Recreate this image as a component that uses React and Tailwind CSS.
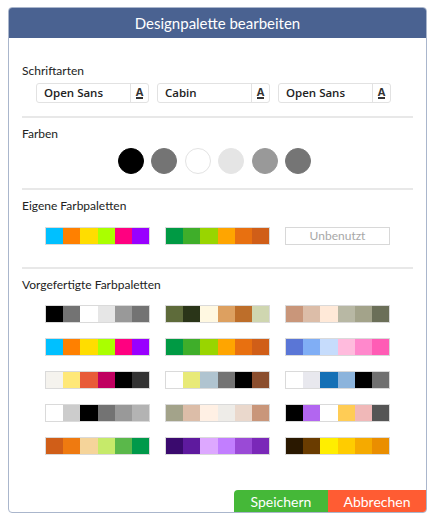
import React from "react";

const presets = [
  ["#000000", "#737373", "#ffffff", "#e6e6e6", "#999999", "#737373"],
  ["#5e6b3a", "#2a3518", "#fff8e1", "#dda060", "#bd6e2a", "#cfd6b0"],
  ["#c9967a", "#dcbda8", "#ffe9d8", "#b8b8a4", "#a3a38a", "#6b6f58"],
  ["#00c0ff", "#ff8000", "#ffdd00", "#aaff00", "#ff0080", "#9900ff"],
  ["#009a44", "#3fae2a", "#99d500", "#ffa500", "#e87010", "#d05e18"],
  ["#5a76d6", "#80aef5", "#c6dcfc", "#ffbbdd", "#ff88cc", "#ff5cb5"],
  ["#f5f3ee", "#ffe878", "#e85b38", "#c00060", "#000000", "#333333"],
  ["#ffffff", "#e8ea78", "#b0c4d0", "#737373", "#000000", "#8b4e2e"],
  ["#ffffff", "#e8e8ee", "#1570b5", "#8cb4dc", "#000000", "#707070"],
  ["#ffffff", "#cccccc", "#000000", "#737373", "#999999", "#b3b3b3"],
  ["#a3a38a", "#dcbda8", "#fff0e4", "#eeece8", "#ead8cc", "#c9967a"],
  ["#000000", "#b266f0", "#ffffff", "#ffcc55", "#f0b8b8", "#555555"],
  ["#d05e18", "#ef7a10", "#f5d49a", "#c6ea6a", "#5ab84a", "#00994a"],
  ["#3a0a6e", "#5e1a9e", "#dda8ff", "#c27eff", "#9a4ad6", "#7a28b8"],
  ["#2a1800", "#6a3c00", "#ffee00", "#ffcc00", "#f5aa00", "#ea8e00"],
];

const own = [
  ["#00c0ff", "#ff8000", "#ffdd00", "#aaff00", "#ff0080", "#9900ff"],
  ["#009a44", "#3fae2a", "#99d500", "#ffa500", "#e87010", "#d05e18"],
];

const circles = [
  { c: "#000000", b: "#000000" },
  { c: "#747474", b: "#747474" },
  { c: "#ffffff", b: "#e3e3e3" },
  { c: "#e5e5e5", b: "#e5e5e5" },
  { c: "#999999", b: "#999999" },
  { c: "#757575", b: "#757575" },
];

function Strip({ colors }) {
  return (
    <div className="flex h-[18px] w-[105px] border border-[#dadada]">
      {colors.map((c, i) => (
        <div key={i} className="flex-1" style={{ backgroundColor: c }} />
      ))}
    </div>
  );
}

function FontBox({ name }) {
  return (
    <div className="flex h-[20px] w-[113px] items-center rounded-[3px] border border-[#e2e2e2] bg-white">
      <div className="flex-1 pl-[7px] text-[11.5px] font-semibold leading-none text-[#222] [font-family:'Open_Sans',sans-serif]">
        {name}
      </div>
      <div className="flex h-full w-[18px] items-center justify-center border-l border-[#e2e2e2]">
        <span className="border-b-[2px] border-[#333] text-[11px] font-bold leading-[10px] text-[#333] [font-family:'Open_Sans',sans-serif]">
          A
        </span>
      </div>
    </div>
  );
}

function Label({ children, className = "" }) {
  return (
    <div className={"text-[12px] leading-[16px] text-[#222] " + className}>{children}</div>
  );
}

function Sep({ className = "" }) {
  return <div className={"h-[2px] bg-[#e8e8e8] " + className} />;
}

export default function App() {
  return (
    <div className="h-[520px] w-[435px] bg-white pl-[8px] pt-[7px] [font-family:Lato,'Noto_Sans',sans-serif]">
      <div className="flex h-[506px] w-[419px] flex-col overflow-hidden rounded-[4px] border border-[#aab6cc] bg-white">
        <div className="flex h-[30px] items-center justify-center bg-[#4a6291] text-[15px] text-white">
          Designpalette bearbeiten
        </div>
        <div className="px-[13px]">
          <Label className="mt-[25px]">Schriftarten</Label>
          <div className="mt-[4px] flex justify-center gap-[8px] pr-[8px]">
            <FontBox name="Open Sans" />
            <FontBox name="Cabin" />
            <FontBox name="Open Sans" />
          </div>
          <Sep className="mt-[13px]" />
          <Label className="mt-[8px]">Farben</Label>
          <div className="mt-[6px] flex justify-center gap-[7.4px] pr-[6px]">
            {circles.map((c, i) => (
              <div
                key={i}
                className="h-[26px] w-[26px] rounded-full border"
                style={{ backgroundColor: c.c, borderColor: c.b }}
              />
            ))}
          </div>
          <Sep className="mt-[14px]" />
          <Label className="mt-[8px]">Eigene Farbpaletten</Label>
          <div className="mt-[13px] flex justify-center gap-[15px]">
            {own.map((p, i) => (
              <Strip key={i} colors={p} />
            ))}
            <div className="flex h-[18px] w-[105px] items-center justify-center border border-[#d8d8d8] text-[12px] text-[#a8a8a8]">
              Unbenutzt
            </div>
          </div>
          <Sep className="mt-[22px]" />
          <Label className="mt-[8px]">Vorgefertigte Farbpaletten</Label>
          <div className="mt-[12px] grid grid-cols-[105px_105px_105px] justify-center gap-x-[15px] gap-y-[15px]">
            {presets.map((p, i) => (
              <Strip key={i} colors={p} />
            ))}
          </div>
        </div>
        <div className="mt-auto flex justify-end">
          <div className="flex h-[22px] w-[94px] items-center justify-center rounded-tl-[4px] bg-[#45b838] text-[14px] text-white">
            Speichern
          </div>
          <div className="flex h-[22px] w-[98px] items-center justify-center bg-[#ff5c33] text-[14px] text-white">
            Abbrechen
          </div>
        </div>
      </div>
    </div>
  );
}
